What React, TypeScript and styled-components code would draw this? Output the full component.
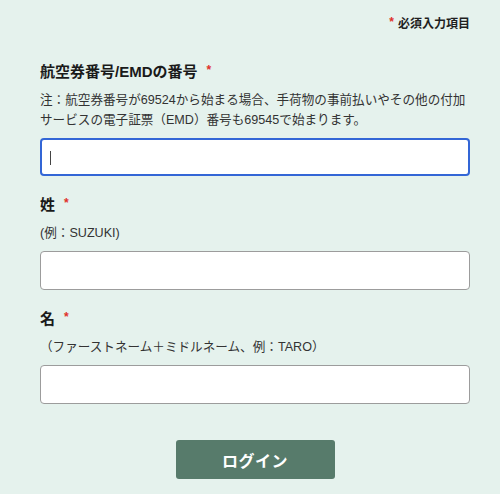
import React from "react";
import styled, { createGlobalStyle } from "styled-components";

const Global = createGlobalStyle`
  html, body { margin: 0; padding: 0; background: #e5f2ed; }
  body { font-family: "Liberation Sans", "Noto Sans CJK JP", sans-serif; color: #222; }
`;

const Page = styled.div`
  padding: 14px 30px 20px 40px;
  display: flex;
  flex-direction: column;
`;

const RequiredNote = styled.div`
  align-self: flex-end;
  font-size: 12px;
  line-height: 20px;
  font-weight: 700;
  color: #1f1f1f;
`;

const Star = styled.sup<{ $before?: number }>`
  color: #e0302a;
  font-size: 12px;
  font-weight: 700;
  vertical-align: top;
  position: relative;
  top: -2px;
  margin-right: 4px;
  margin-left: ${(p) => p.$before ?? 0}px;
`;

const Field = styled.div<{ $top: number }>`
  margin-top: ${(p) => p.$top}px;
  display: flex;
  flex-direction: column;
`;

const Label = styled.div`
  font-size: 15px;
  line-height: 22px;
  font-weight: 700;
  color: #1a1a1a;
`;

const Hint = styled.div`
  margin-top: 7px;
  font-size: 12.6px;
  line-height: 20px;
  color: #333;
`;

const InputWrap = styled.div`
  position: relative;
  margin-top: 8px;
`;

const Input = styled.input<{ $focused?: boolean }>`
  box-sizing: border-box;
  width: 100%;
  height: ${(p) => (p.$focused ? 38 : 39)}px;
  background: #fff;
  border: ${(p) => (p.$focused ? "2px solid #3366d6" : "1.5px solid #9c9c9c")};
  border-radius: 4px;
  outline: none;
  padding: 0 10px;
  font-size: 15px;
  font-family: inherit;
`;

const Caret = styled.span`
  position: absolute;
  left: 10px;
  top: 13px;
  width: 1px;
  height: 14px;
  background: #444;
`;

const ButtonRow = styled.div`
  margin-top: 36px;
  display: flex;
  justify-content: center;
`;

const LoginButton = styled.button`
  width: 159px;
  height: 39px;
  border: none;
  border-radius: 3px;
  background: #577b6b;
  color: #fff;
  font-family: inherit;
  font-size: 16px;
  font-weight: 700;
  letter-spacing: 0.5px;
`;

export default function App() {
  return (
    <>
      <Global />
      <Page>
        <RequiredNote>
          <Star>*</Star>必須入力項目
        </RequiredNote>

        <Field $top={27}>
          <Label>
            航空券番号/EMDの番号<Star $before={9}>*</Star>
          </Label>
          <Hint>
            注：航空券番号が69524から始まる場合、手荷物の事前払いやその他の付加サービスの電子証票（EMD）番号も69545で始まります。
          </Hint>
          <InputWrap>
            <Input $focused type="text" />
            <Caret />
          </InputWrap>
        </Field>

        <Field $top={18}>
          <Label>
            姓<Star $before={9}>*</Star>
          </Label>
          <Hint>(例：SUZUKI)</Hint>
          <InputWrap>
            <Input type="text" />
          </InputWrap>
        </Field>

        <Field $top={18}>
          <Label>
            名<Star $before={9}>*</Star>
          </Label>
          <Hint>（ファーストネーム＋ミドルネーム、例：TARO）</Hint>
          <InputWrap>
            <Input type="text" />
          </InputWrap>
        </Field>

        <ButtonRow>
          <LoginButton>ログイン</LoginButton>
        </ButtonRow>
      </Page>
    </>
  );
}
